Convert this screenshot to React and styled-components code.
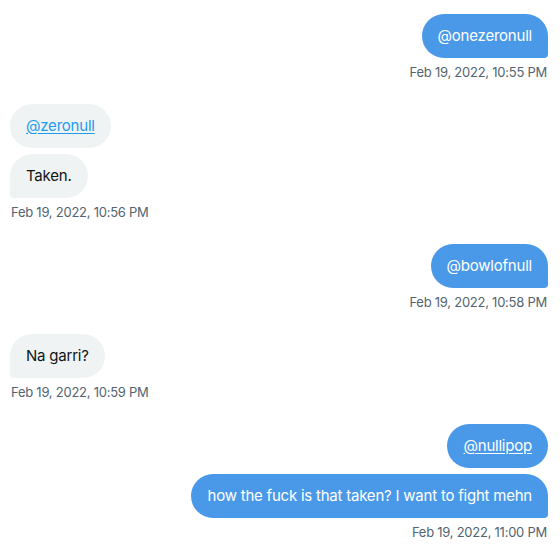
import styled, { createGlobalStyle } from "styled-components";

const GlobalStyle = createGlobalStyle`
  body {
    margin: 0;
    background: #ffffff;
    font-family: Inter, "Noto Sans", "Liberation Sans", sans-serif;
  }
`;

const messages = [
  { id: 1, mine: true, time: "Feb 19, 2022, 10:55 PM", parts: [{ text: "@onezeronull" }] },
  {
    id: 2,
    mine: false,
    time: "Feb 19, 2022, 10:56 PM",
    parts: [{ text: "@zeronull", link: true }, { text: "Taken." }],
  },
  { id: 3, mine: true, time: "Feb 19, 2022, 10:58 PM", parts: [{ text: "@bowlofnull" }] },
  { id: 4, mine: false, time: "Feb 19, 2022, 10:59 PM", parts: [{ text: "Na garri?" }] },
  {
    id: 5,
    mine: true,
    time: "Feb 19, 2022, 11:00 PM",
    parts: [
      { text: "@nullipop", link: true },
      { text: "how the fuck is that taken? I want to fight mehn" },
    ],
  },
];

const App = () => {
  return (
    <>
      <GlobalStyle />
      <Thread>
        {messages.map((m) => (
          <Group key={m.id} $mine={m.mine}>
            <Bubbles $mine={m.mine}>
              {m.parts.map((p, i) => (
                <Bubble key={i} $mine={m.mine} $last={i === m.parts.length - 1}>
                  {p.link ? <Mention $mine={m.mine}>{p.text}</Mention> : p.text}
                </Bubble>
              ))}
            </Bubbles>
            <Time>{m.time}</Time>
          </Group>
        ))}
      </Thread>
    </>
  );
};

const Thread = styled.div`
  display: flex;
  flex-direction: column;
  gap: 24px;
  padding: 14px 12px 0 10px;
`;

const Group = styled.div`
  display: flex;
  flex-direction: column;
  align-items: ${(p) => (p.$mine ? "flex-end" : "flex-start")};
`;

const Bubbles = styled.div`
  display: flex;
  flex-direction: column;
  align-items: ${(p) => (p.$mine ? "flex-end" : "flex-start")};
  gap: 6px;
`;

const Bubble = styled.div`
  box-sizing: border-box;
  height: 44px;
  display: flex;
  align-items: center;
  padding: 0 16px;
  font-size: 15px;
  line-height: 20px;
  letter-spacing: -0.22px;
  white-space: nowrap;
  border-radius: 22px;
  background: ${(p) => (p.$mine ? "#4a99e9" : "#eff3f4")};
  color: ${(p) => (p.$mine ? "#ffffff" : "#0f1419")};
  ${(p) =>
    p.$last &&
    (p.$mine ? "border-bottom-right-radius: 4px;" : "border-bottom-left-radius: 4px;")}
`;

const Mention = styled.span`
  color: ${(p) => (p.$mine ? "#ffffff" : "#1d9bf0")};
  text-decoration: underline;
  text-underline-offset: 2px;
`;

const Time = styled.div`
  margin-top: 6px;
  padding: 0 1px;
  font-size: 13px;
  line-height: 16px;
  letter-spacing: -0.25px;
  color: #536471;
`;

export default App;
